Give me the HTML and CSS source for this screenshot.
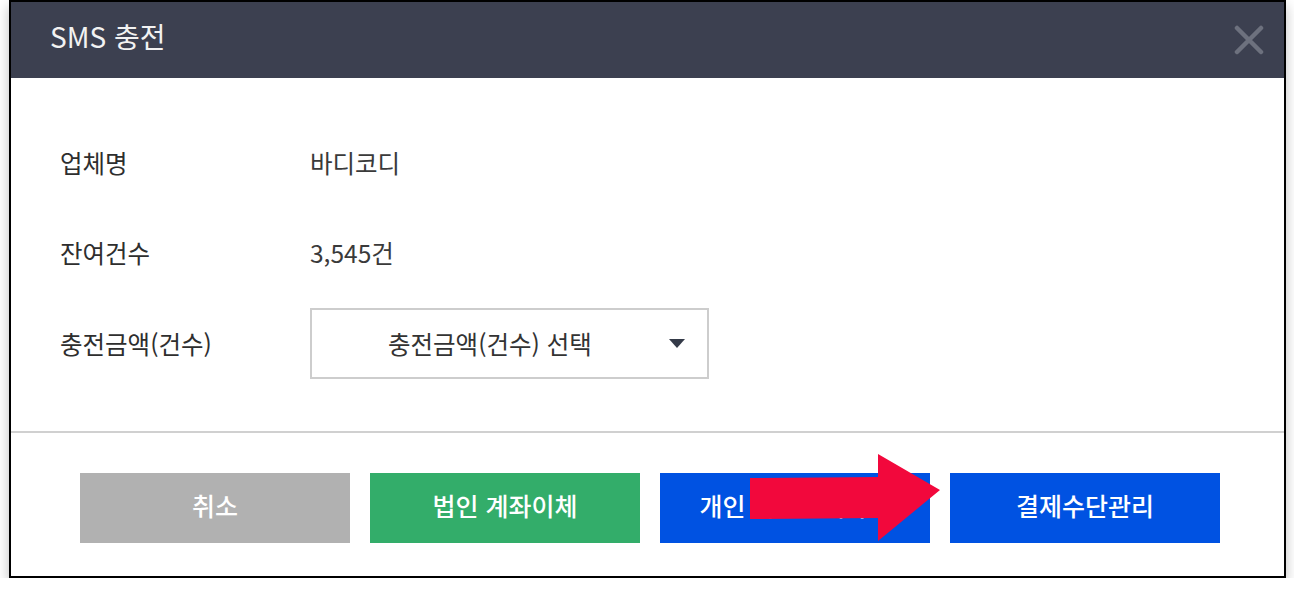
FILE: index.html
```html
<!DOCTYPE html>
<html lang="ko">
<head>
  <meta charset="UTF-8" />
  <meta name="viewport" content="width=device-width, initial-scale=1.0" />
  <title>SMS 충전</title>
  <link rel="stylesheet" href="styles.css">
</head>
<body>
  <div class="dialog">
    <header class="dialog-head">
      <h1>SMS 충전</h1>
      <button class="close" aria-label="닫기">
        <svg width="30" height="30" viewBox="0 0 30 30">
          <path d="M3 3 L27 27 M27 3 L3 27" stroke="#6d717e" stroke-width="4.5" stroke-linecap="round" fill="none" />
        </svg>
      </button>
    </header>

    <div class="dialog-body">
      <div class="row row-text">
        <span class="label">업체명</span>
        <span class="value">바디코디</span>
      </div>
      <div class="row row-text">
        <span class="label">잔여건수</span>
        <span class="value">3,545건</span>
      </div>
      <div class="row row-select">
        <span class="label">충전금액(건수)</span>
        <div class="select">
          <span class="select-text">충전금액(건수) 선택</span>
          <span class="caret"></span>
        </div>
      </div>
    </div>

    <div class="dialog-foot">
      <button class="btn btn-gray">취소</button>
      <button class="btn btn-green">법인 계좌이체</button>
      <button class="btn btn-blue">개인 카드결제하기</button>
      <button class="btn btn-blue">결제수단관리</button>

      <!-- annotation arrow drawn over the buttons -->
      <svg class="arrow" width="200" height="100" viewBox="0 0 200 100">
        <path d="M8 26 L136 25 L136 2 L198 38 L136 89 L136 66 L8 67 Z" fill="#f2083c" />
      </svg>
    </div>
  </div>
</body>
</html>
```

FILE: styles.css
```css
* {
  box-sizing: border-box;
}
body {
  margin: 0;
  background-color: #fff;
  font-family: "Noto Sans CJK KR", "Noto Sans", sans-serif;
  color: #333;
}
.dialog {
  width: 1277px;
  margin: 0 0 0 9px;
  border: 2px solid #000;
  background-color: #fff;
  box-shadow: 0 6px 12px rgba(0, 0, 0, 0.25);
}
.dialog-head {
  height: 76px;
  background-color: #3c4050;
  display: flex;
  align-items: center;
  justify-content: space-between;
  padding: 0 20px 0 39px;
}
.dialog-head h1 {
  margin: 0;
  font-size: 28px;
  font-weight: 400;
  color: #f2f2f2;
  margin-top: -8px;
}
.close {
  background: none;
  border: none;
  padding: 0;
  width: 30px;
  height: 30px;
  cursor: pointer;
  margin-top: -1px;
}
.dialog-body {
  padding: 59px 0 52px 49px;
  border-bottom: 2px solid #d0d0d0;
}
.row {
  display: flex;
  align-items: center;
  font-size: 24.5px;
}
.row-text {
  height: 50px;
  margin-bottom: 40px;
}
.row-text + .row-select {
  margin-top: -9px;
}
.label {
  width: 250px;
  color: #2e2e2e;
}
.value {
  color: #3a3a3a;
}
.select {
  width: 399px;
  height: 71px;
  border: 2px solid #cdcdcd;
  display: flex;
  align-items: center;
  justify-content: space-between;
  padding: 0 22px 0 76px;
}
.select-text {
  color: #333;
}
.caret {
  width: 0;
  height: 0;
  border-left: 8px solid transparent;
  border-right: 8px solid transparent;
  border-top: 9px solid #343a48;
}
.dialog-foot {
  position: relative;
  display: flex;
  gap: 20px;
  padding: 40px 0 33px 69px;
}
.btn {
  width: 270px;
  height: 70px;
  border: none;
  padding: 0 0 6px;
  font-family: inherit;
  font-size: 25px;
  font-weight: 500;
  color: #fff;
  cursor: pointer;
}
.btn-gray {
  background-color: #b1b1b1;
}
.btn-green {
  background-color: #33ad6a;
}
.btn-blue {
  background-color: #0052e2;
}
.arrow {
  position: absolute;
  left: 731px;
  top: 19px;
}
```
